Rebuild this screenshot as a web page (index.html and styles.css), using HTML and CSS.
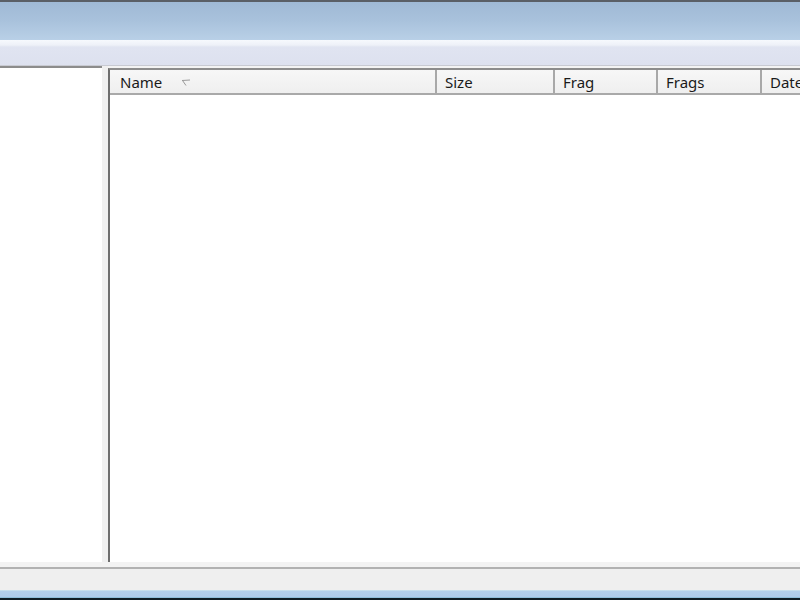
FILE: index.html
```html
<!DOCTYPE html>
<html>
<head>
<meta charset="utf-8">
<link rel="stylesheet" href="styles.css">
</head>
<body>
<div class="window">
  <div class="topline"></div>
  <div class="titlebar"></div>
  <div class="toolbar"></div>
  <div class="main">
    <div class="tree"></div>
    <div class="splitter"></div>
    <div class="list">
      <div class="header">
        <div class="col col-name">Name <span class="sort">
          <svg width="10" height="8" viewBox="0 0 10 8"><path d="M1 1.5 L9 1 M1.5 1.5 L5 6.5" stroke="#9a9a9a" stroke-width="1" fill="none"/></svg>
        </span></div>
        <div class="col col-size">Size</div>
        <div class="col col-frag">Frag</div>
        <div class="col col-frags">Frags</div>
        <div class="col col-date">Date</div>
      </div>
      <div class="rows"></div>
    </div>
  </div>
  <div class="statusbar"></div>
  <div class="taskline"></div>
</div>
</body>
</html>
```
FILE: styles.css
```css
html, body {
  margin: 0;
  padding: 0;
}
body {
  width: 800px;
  height: 600px;
  overflow: hidden;
  background: #f0f0f0;
  font-family: "Noto Sans", "Open Sans", "DejaVu Sans", sans-serif;
}
.window {
  display: flex;
  flex-direction: column;
  width: 800px;
  height: 600px;
}
.topline {
  height: 2px;
  background: #5a5f66;
}
.titlebar {
  height: 38px;
  background: linear-gradient(#9fb9d5, #a9c2dc 50%, #b9d0e7);
}
.toolbar {
  height: 25px;
  background: linear-gradient(#f6f9fd 0, #eef1f8 5px, #e0e4f1 7px, #dde1ef 100%);
  border-bottom: 1px solid #c8cad2;
}
.main {
  flex: 1;
  display: flex;
  background: #f3f3f3;
  padding-bottom: 5px;
  border-bottom: 2px solid #b2b2b2;
  min-height: 0;
}
.tree {
  flex: none;
  width: 102px;
  background: #ffffff;
  border-top: 2px solid #8c8c8c;
}
.splitter {
  flex: none;
  width: 6px;
  background: #f0f0f0;
}
.list {
  flex: 1;
  min-width: 0;
  margin-top: 2px;
  display: flex;
  flex-direction: column;
  background: #ffffff;
  border-left: 2px solid #6e6e6e;
  border-top: 2px solid #8c8c8c;
  overflow: hidden;
}
.header {
  flex: none;
  height: 23px;
  display: flex;
  background: linear-gradient(#f7f7f7, #efefef);
  border-bottom: 2px solid #a9a9a9;
  white-space: nowrap;
  overflow: hidden;
}
.col {
  flex: none;
  box-sizing: border-box;
  font-size: 15px;
  color: #1a1a1a;
  line-height: 23px;
  padding-left: 8px;
  padding-top: 2px;
  border-right: 2px solid #a8a8a8;
  display: flex;
  align-items: center;
}
.col-name { width: 327px; padding-left: 10px; }
.col-size { width: 118px; }
.col-frag { width: 103px; }
.col-frags { width: 104px; }
.col-date { width: 80px; border-right: none; }
.sort {
  margin-left: 19px;
  display: inline-flex;
  align-items: center;
  height: 23px;
}
.rows {
  flex: 1;
  background: #ffffff;
}
.statusbar {
  flex: none;
  height: 21px;
  background: #efefef;
}
.taskline {
  flex: none;
  height: 10px;
  background: linear-gradient(#d8ecec 0, #b2cfe9 1px, #aecbe8 7px, #6fb0c8 8px, #0f1c22 8px);
}
```
